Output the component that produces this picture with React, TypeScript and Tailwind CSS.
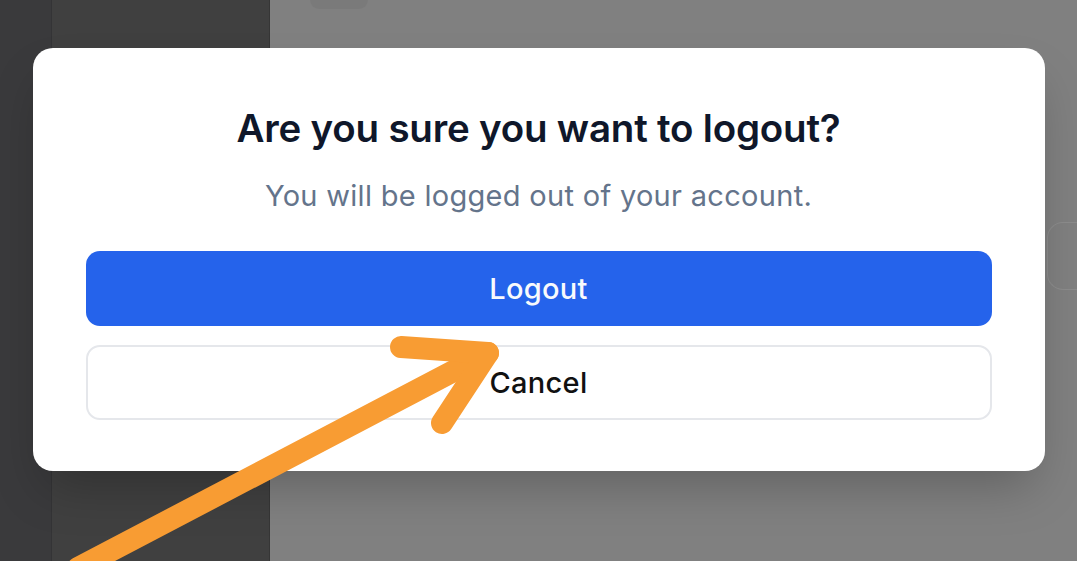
export default function App() {
  return (
    <div className="relative w-[1077px] h-[561px] overflow-hidden flex font-['Inter',sans-serif]">
      {/* Dimmed page behind the dialog */}
      <aside className="w-[52px] bg-[#3a3a3c] border-r border-[#343436]" />
      <nav className="w-[218px] bg-[#404040] border-r border-[#363636]" />
      <main className="flex-1 bg-[#808080] flex flex-col">
        <div className="ml-[40px] w-[58px] h-[9px] rounded-b-full bg-[#7a7a7a]" />
        <div className="mt-[213px] self-end w-[30px] h-[68px] rounded-l-2xl border border-r-0 border-[#8c8c8c]" />
      </main>

      {/* Logout dialog */}
      <div className="absolute inset-0 flex justify-center pt-[48px]">
        <div className="w-[1012px] h-[423px] bg-white rounded-[20px] shadow-2xl px-[53px] pt-[54px] flex flex-col items-center">
          <h2 className="text-[38.5px] leading-[52px] font-semibold text-[#0f172a] tracking-[-0.2px]">
            Are you sure you want to logout?
          </h2>
          <p className="mt-[22px] text-[29px] leading-[40px] tracking-[0.3px] text-[#64748b]">
            You will be logged out of your account.
          </p>
          <button className="mt-[35px] w-full h-[75px] rounded-[14px] bg-[#2563eb] text-[#f8fafc] text-[29px] tracking-[0.3px] font-medium">
            Logout
          </button>
          <button className="mt-[19px] w-full h-[75px] rounded-[14px] border-2 border-[#e5e7eb] bg-white text-[#111111] text-[29px] tracking-[0.3px] font-medium">
            Cancel
          </button>
        </div>
      </div>

      {/* Annotation arrow */}
      <svg className="absolute inset-0 pointer-events-none" width="1077" height="561" viewBox="0 0 1077 561">
        <g stroke="#f89c33" strokeWidth="22" strokeLinecap="round" strokeLinejoin="round" fill="none">
          <path d="M78 568 L488 353" />
          <path d="M401 347 L488 353 L442 423" />
        </g>
      </svg>
    </div>
  );
}
